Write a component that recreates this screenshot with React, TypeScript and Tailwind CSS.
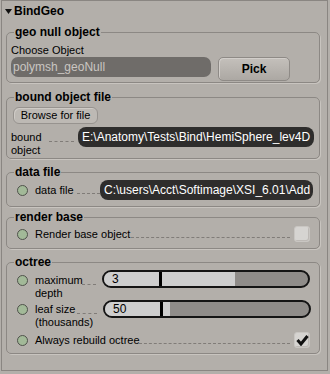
import React from "react";

// Softimage-style property page: BindGeo

function Led() {
  return <div className="h-[11px] w-[11px] shrink-0 rounded-full border border-[#4f524b] bg-[#a2b998]" />;
}

function Dash({ className }: { className: string }) {
  return <div className={"h-0 border-b border-dashed border-[#807c78] " + className} />;
}

function Check({ on }: { on?: boolean }) {
  return (
    <div className="flex h-[16px] w-[16px] shrink-0 items-center justify-center rounded-[3px] border border-[#c9c6c2] bg-[#d6d4d1] shadow-[inset_-1px_-1px_0_#bdb9b5]">
      {on && (
        <svg width="13" height="12" viewBox="0 0 13 12">
          <path d="M1.5 6 L5 10 L11.5 2" fill="none" stroke="#111" strokeWidth="3" strokeLinejoin="miter" />
        </svg>
      )}
    </div>
  );
}

function Slider({ value, fill }: { value: string; fill: number }) {
  return (
    <div className="flex h-[18px] w-[208px] shrink-0 overflow-hidden rounded-full border-2 border-[#141414] bg-[#8f8c89]">
      <div className="flex w-[55px] items-center bg-[#cecece] pl-[8px] text-[12px] leading-[14px]">{value}</div>
      <div className="w-[3px] bg-black" />
      <div className="bg-[#cecece]" style={{ width: fill }} />
    </div>
  );
}

function Group({ title, h, className, children }: { title: string; h: string; className?: string; children: React.ReactNode }) {
  return (
    <fieldset className={"w-[314px] rounded-[5px] border border-[#8c8884] p-0 shadow-[1px_1px_0_#c8c4bf] " + h + " " + (className ?? "")}>
      <legend className="ml-[7px] px-[1px] text-[12px] font-bold leading-[14px]">{title}</legend>
      <div className="pl-[4px]">{children}</div>
    </fieldset>
  );
}

export default function App() {
  return (
    <div className="h-[374px] w-[330px] bg-[#b3afaa] font-['Liberation_Sans',Arial,sans-serif] text-[11px] leading-[13px] text-black">
      <div className="ml-[1px] h-[371px] w-[327px] border border-[#8a8682]">
        {/* header */}
        <div className="flex h-[24px] items-start pl-[3px] pt-[4px]">
          <svg width="7" height="5" viewBox="0 0 7 5" className="mt-[4px]">
            <path d="M0 0 H7 L3.5 5 Z" fill="#111" />
          </svg>
          <span className="ml-[2px] text-[12px] font-bold leading-[13px]">BindGeo</span>
        </div>

        <div className="pl-[4px]">
          <Group title="geo null object" h="h-[58px]">
            <div className="mt-[5px]">Choose Object</div>
            <div className="flex items-start">
              <div className="h-[20px] w-[200px] rounded-[7px] bg-[#6f6c69] pl-[2px] text-[12px] leading-[20px] text-[#cac6c2]">
                polymsh_geoNull
              </div>
              <button className="ml-[7px] h-[24px] w-[72px] rounded-[5px] border border-[#8e8a86] bg-gradient-to-b from-[#c4c0bb] to-[#aca8a3] text-[12px] font-bold shadow-[inset_1px_1px_0_#d2ceca]">
                Pick
              </button>
            </div>
          </Group>

          <Group title="bound object file" h="h-[69px]" className="mt-[7px]">
            <button className="ml-[2px] mt-[3px] block h-[17px] w-[85px] rounded-[6px] border border-[#97938f] bg-[#bdb9b4] text-[11px] leading-[15px] shadow-[inset_1px_1px_0_#cfcbc6]">
              Browse for file
            </button>
            <div className="mt-[3px] flex items-start">
              <div className="mt-[4px] w-[37px]">
                bound
                <br />
                object
              </div>
              <Dash className="ml-[1px] mt-[14px] w-[25px]" />
              <div className="ml-[4px] h-[20px] w-[236px] overflow-hidden whitespace-nowrap rounded-[8px] bg-[#2e2d2c] pl-[4px] text-[12px] leading-[20px] text-white">
                E:\Anatomy\Tests\Bind\HemiSphere_lev4D
              </div>
            </div>
          </Group>

          <Group title="data file" h="h-[42px]" className="mt-[6px]">
            <div className="mt-[1px] flex h-[20px] items-center">
              <div className="ml-[6px]"><Led /></div>
              <span className="ml-[7px] w-[42px]">data file</span>
              <Dash className="mt-[6px] w-[23px]" />
              <div className="h-[20px] w-[213px] overflow-hidden whitespace-nowrap rounded-[8px] bg-[#2e2d2c] pl-[4px] text-[12px] leading-[20px] text-white">
                C:\users\Acct\Softimage\XSI_6.01\Add
              </div>
            </div>
          </Group>

          <Group title="render base" h="h-[39px]" className="mt-[3px]">
            <div className="flex h-[20px] items-center">
              <div className="ml-[6px]"><Led /></div>
              <span className="ml-[7px] w-[96px]">Render base object</span>
              <Dash className="mt-[6px] w-[159px]" />
              <div className="ml-[4px]"><Check /></div>
            </div>
          </Group>

          <Group title="octree" h="h-[99px]" className="mt-[6px]">
            <div className="mt-[1px] flex h-[30px] items-start">
              <div className="ml-[6px] mt-[5px]"><Led /></div>
              <span className="ml-[7px] mt-[4px] w-[47px]">
                maximum
                <br />
                depth
              </span>
              <Dash className="mt-[14px] w-[14px]" />
              <div className="ml-[6px]"><Slider value="3" fill={73} /></div>
            </div>
            <div className="flex h-[31px] items-start">
              <div className="ml-[6px] mt-[4px]"><Led /></div>
              <span className="ml-[7px] mt-[3px] w-[42px]">
                leaf size
                <br />
                (thousands)
              </span>
              <Dash className="mt-[13px] w-[20px]" />
              <div className="ml-[6px]"><Slider value="50" fill={7} /></div>
            </div>
            <div className="flex h-[18px] items-center">
              <div className="ml-[6px]"><Led /></div>
              <span className="ml-[7px] w-[104px] whitespace-nowrap">Always rebuild octree</span>
              <Dash className="mt-[6px] w-[151px]" />
              <div className="ml-[4px]"><Check on /></div>
            </div>
          </Group>
        </div>
      </div>
    </div>
  );
}
